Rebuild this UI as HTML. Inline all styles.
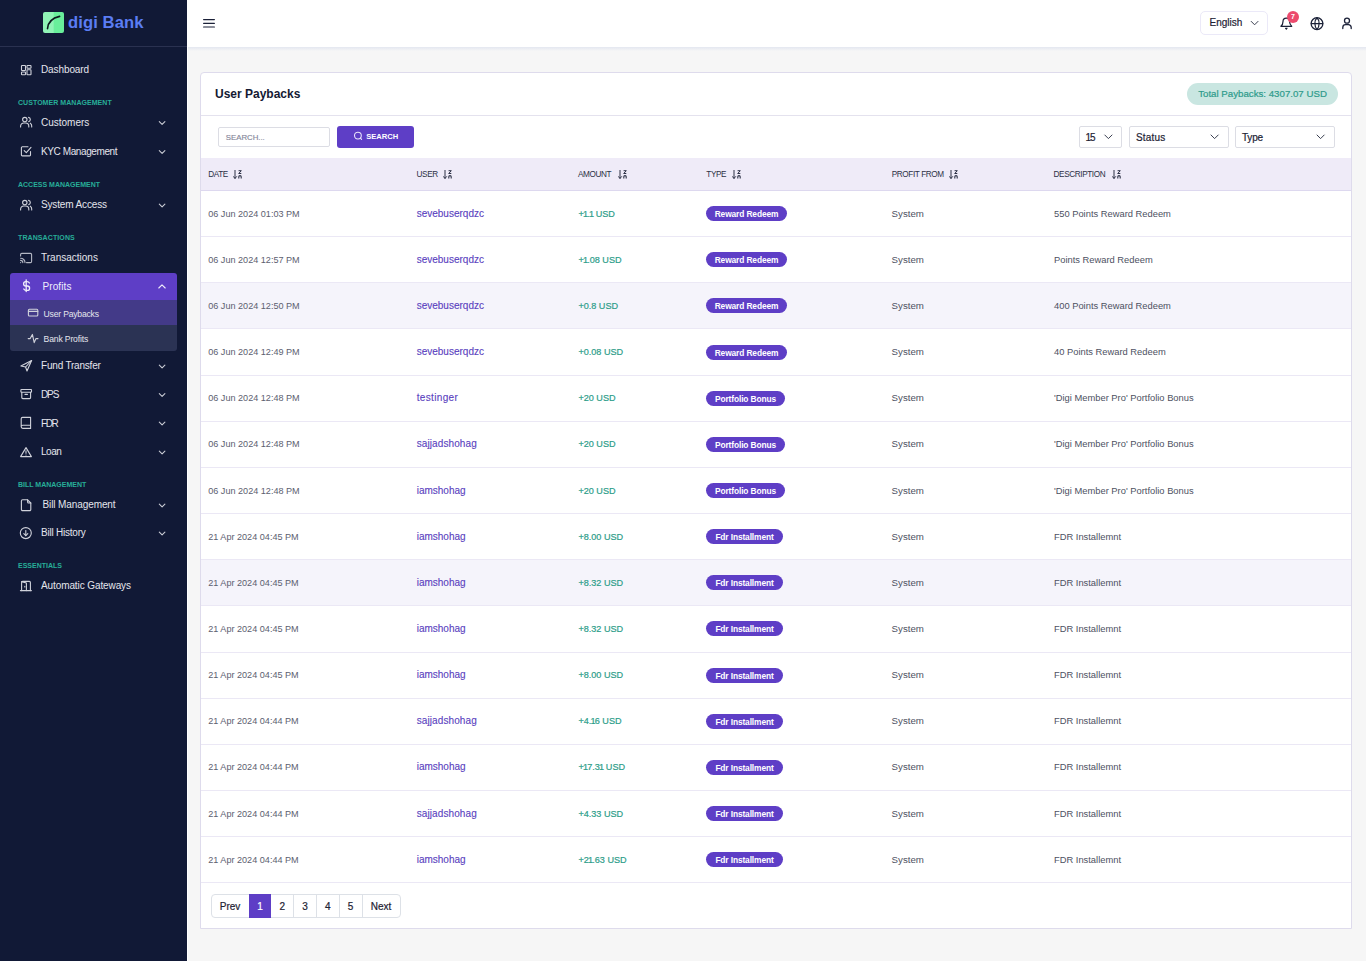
<!DOCTYPE html>
<html><head><meta charset="utf-8">
<style>
*{box-sizing:border-box;margin:0;padding:0}
html,body{width:1366px;height:961px;overflow:hidden}
body{background:#f6f6f6;font-family:"Liberation Sans",sans-serif;position:relative}
.a{position:absolute}
.t{position:absolute;white-space:nowrap;line-height:20px;height:20px}
#sb{position:absolute;left:0;top:0;width:187px;height:961px;background:#111936}
#sb .t{color:#e4e5ec;font-size:10px;left:41px}
#sb .sec{color:#27ad98;font-size:7px;left:18px;font-weight:bold}
#sb svg{position:absolute}
#hdr{position:absolute;left:187px;top:0;width:1179px;height:47px;background:#fff}
#card{position:absolute;left:200px;top:72px;width:1152px;height:857px;background:#fff;border:1px solid #dedbec;border-radius:4px 4px 0 0;overflow:hidden}
.th{font-size:8.2px;color:#2c3045;letter-spacing:-0.4px}
.td{font-size:10px}
.dt{font-size:9.1px;color:#5c6070}
.us{color:#5a3fc0;-webkit-text-stroke:.12px #5a3fc0}
.am{font-size:9.1px;color:#2c9d89;-webkit-text-stroke:.2px #2c9d89}
.n1{letter-spacing:-0.8px;margin-left:-0.8px}
.bd{height:15px;line-height:16px;border-radius:8px;background:#5e3ec6;color:#fff;font-weight:bold;font-size:8.4px;text-align:center;letter-spacing:-.12px}
.sy{color:#4d5162;font-size:9.7px}
.ds{color:#4d5162;font-size:9.35px}
</style></head><body>
<div id="sb">
  <div class="a" style="left:43px;top:12px;width:21px;height:21px;border-radius:2px;background:linear-gradient(90deg,#90f4b6 0,#90f4b6 49%,#69ef9b 52%,#69ef9b 100%)"></div>
  <svg style="left:43px;top:12px" width="21" height="21" viewBox="0 0 21 21"><path d="M4.5 16.6 C5 10.5 9.5 6 16.6 4.4" fill="none" stroke="#0d1a1e" stroke-width="1.6" stroke-linecap="round"/></svg>
  <div class="t" style="left:68px;top:12.6px;font-size:16.6px;font-weight:bold;color:#5b7df3;line-height:20px;letter-spacing:0.1px">digi Bank</div>
  <div class="a" style="left:0;top:46px;width:187px;height:1px;background:#2a3150"></div>

  <!-- active profits block -->
  <div class="a" style="left:10px;top:273px;width:167px;height:27px;background:#5e3ec6;border-radius:3px 3px 0 0"></div>
  <div class="a" style="left:10px;top:300px;width:167px;height:25px;background:#433a88"></div>
  <div class="a" style="left:10px;top:325px;width:167px;height:26px;background:#2b3354;border-radius:0 0 3px 3px"></div>

  <div class="t" style="top:60.2px;letter-spacing:-0.1px">Dashboard</div>
  <div class="t sec" style="top:93.1px;letter-spacing:0.05px">CUSTOMER MANAGEMENT</div>
  <div class="t" style="top:113.2px">Customers</div>
  <div class="t" style="top:142.0px;letter-spacing:-0.4px">KYC Management</div>
  <div class="t sec" style="top:175.4px">ACCESS MANAGEMENT</div>
  <div class="t" style="top:195.2px;letter-spacing:-0.15px">System Access</div>
  <div class="t sec" style="top:228.0px;letter-spacing:0.1px">TRANSACTIONS</div>
  <div class="t" style="top:248.1px">Transactions</div>
  <div class="t" style="top:276.5px;left:42.5px;letter-spacing:0.1px;color:#f0eefb">Profits</div>
  <div class="t" style="top:303.6px;left:43.6px;font-size:8.6px;letter-spacing:-0.2px">User Paybacks</div>
  <div class="t" style="top:328.8px;left:43.6px;font-size:8.6px;letter-spacing:-0.15px">Bank Profits</div>
  <div class="t" style="top:356.2px;letter-spacing:-0.2px">Fund Transfer</div>
  <div class="t" style="top:385.2px;letter-spacing:-1.1px">DPS</div>
  <div class="t" style="top:413.6px;letter-spacing:-1.4px">FDR</div>
  <div class="t" style="top:442.3px;letter-spacing:-0.45px">Loan</div>
  <div class="t sec" style="top:475.2px">BILL MANAGEMENT</div>
  <div class="t" style="top:495.1px;left:42.5px;letter-spacing:-0.1px">Bill Management</div>
  <div class="t" style="top:523.2px;letter-spacing:-0.22px">Bill History</div>
  <div class="t sec" style="top:555.9px">ESSENTIALS</div>
  <div class="t" style="top:576.1px;letter-spacing:-0.1px">Automatic Gateways</div>

  <svg class="a" style="left:0;top:0" width="187" height="961" viewBox="0 0 187 961" fill="none" stroke="#d0d2db" stroke-width="1.1" stroke-linecap="round" stroke-linejoin="round">
    <!-- dashboard -->
    <rect x="21.5" y="65.5" width="4" height="5" rx=".6"/><rect x="21.5" y="72" width="4" height="2.8" rx=".6"/>
    <rect x="27" y="65.5" width="4" height="2.8" rx=".6"/><rect x="27" y="69.8" width="4" height="5" rx=".6"/>
    <!-- customers -->
    <circle cx="24.8" cy="119.6" r="2.2"/><path d="M20.6 127 v-.8 a3.2 3.2 0 0 1 3.2-3.2 h1.8 a3.2 3.2 0 0 1 3.2 3.2 v.8"/><path d="M28.6 117.4 a2.2 2.2 0 0 1 0 4.3"/><path d="M30.3 123.2 a3 3 0 0 1 1.4 2.8 v1"/>
    <!-- kyc -->
    <path d="M28 146.8 H22.3 a.9 .9 0 0 0 -.9 .9 V155 a.9 .9 0 0 0 .9 .9 H29.6 a.9 .9 0 0 0 .9 -.9 V151.5"/><path d="M24.2 150.6 L26.3 152.6 L31 147.3"/>
    <!-- system access -->
    <circle cx="24.8" cy="202.6" r="2.2"/><path d="M20.6 210 v-.8 a3.2 3.2 0 0 1 3.2-3.2 h1.8 a3.2 3.2 0 0 1 3.2 3.2 v.8"/><path d="M28.6 200.4 a2.2 2.2 0 0 1 0 4.3"/><path d="M30.3 206.2 a3 3 0 0 1 1.4 2.8 v1"/>
    <!-- transactions cast -->
    <g stroke="#b4b7c4"><path d="M20.6 256 V254.6 a1.2 1.2 0 0 1 1.2 -1.2 H30.4 a1.2 1.2 0 0 1 1.2 1.2 V261.4 a1.2 1.2 0 0 1 -1.2 1.2 H26.5"/><path d="M20.6 262.6 h.1"/><path d="M20.6 260.4 a2.2 2.2 0 0 1 2.2 2.2"/><path d="M20.6 258.2 a4.4 4.4 0 0 1 4.4 4.4"/></g>
    <!-- $ -->
    <path d="M29.4 283 a2.6 2.3 0 0 0 -2.4 -1.4 h-1.2 a2.2 2.2 0 0 0 0 4.4 h1.6 a2.2 2.2 0 0 1 0 4.4 h-1.2 a2.6 2.3 0 0 1 -2.4 -1.4" stroke="#f0eefb" stroke-width="1.3"/><path d="M26.2 279.8 V291.6" stroke="#f0eefb" stroke-width="1.3"/>
    <!-- chevron up for profits -->
    <path d="M158.8 288 L162 284.8 L165.2 288" stroke="#f0eefb"/>
    <!-- user paybacks card -->
    <rect x="28.4" y="309.2" width="9.4" height="6.8" rx="1"/><path d="M28.4 311.4 H37.8"/>
    <!-- bank profits pulse -->
    <path d="M28.2 338.6 H30.2 L32.4 334.4 L34.2 342.6 L36 338.6 H38"/>
    <!-- fund transfer send -->
    <path d="M31.6 360.5 L20.9 366 L25.6 367 L27 371 Z"/><path d="M31.6 360.5 L25.6 367"/>
    <!-- dps archive -->
    <rect x="20.9" y="389.5" width="10.6" height="2.8" rx=".6"/><path d="M21.8 392.3 V397.6 a1 1 0 0 0 1 1 H29.6 a1 1 0 0 0 1-1 V392.3"/><path d="M25 394.4 H27.4"/>
    <!-- fdr book -->
    <path d="M21.2 426.8 V418.8 a1.4 1.4 0 0 1 1.4 -1.4 H30.6 V428.4 H22.8 a1.6 1.6 0 0 1 0 -3.2 H30.6"/>
    <!-- loan warning -->
    <path d="M26 447.6 L20.6 456.6 H31.4 Z"/><path d="M26 450.8 V453.2"/><path d="M26 455 h.01"/>
    <!-- bill doc -->
    <path d="M27.6 499.8 H22.6 a1.2 1.2 0 0 0 -1.2 1.2 V509.4 a1.2 1.2 0 0 0 1.2 1.2 H29.6 a1.2 1.2 0 0 0 1.2 -1.2 V503 Z"/><path d="M27.6 499.8 V502 a1 1 0 0 0 1 1 H30.8"/>
    <!-- bill history -->
    <circle cx="25.8" cy="533.1" r="5.5"/><path d="M25.8 530.6 V535.6"/><path d="M23.8 533.6 L25.8 535.6 L27.8 533.6"/>
    <!-- gateways door -->
    <path d="M20.4 590.6 H31.4"/><path d="M21.6 590.6 V582.4 a1 1 0 0 1 1 -1 H29.4 a1 1 0 0 1 1 1 V590.6"/><path d="M21.6 581.6 L26.4 583 V590.6"/><path d="M24.8 586.2 V587"/>
    <!-- chevrons -->
    <g stroke="#c9cbd4">
    <path d="M159.3 121.6 L162.1 124.4 L164.9 121.6"/>
    <path d="M159.3 150.6 L162.1 153.4 L164.9 150.6"/>
    <path d="M159.3 204.1 L162.1 206.9 L164.9 204.1"/>
    <path d="M159.3 365.1 L162.1 367.9 L164.9 365.1"/>
    <path d="M159.3 393.6 L162.1 396.4 L164.9 393.6"/>
    <path d="M159.3 422.1 L162.1 424.9 L164.9 422.1"/>
    <path d="M159.3 451.1 L162.1 453.9 L164.9 451.1"/>
    <path d="M159.3 504.1 L162.1 506.9 L164.9 504.1"/>
    <path d="M159.3 532.1 L162.1 534.9 L164.9 532.1"/>
    </g>
  </svg>
</div>
<div id="hdr">
  <svg class="a" style="left:0;top:0" width="1179" height="47" viewBox="187 0 1179 47" fill="none" stroke="#1b2138" stroke-width="1.2" stroke-linecap="round" stroke-linejoin="round">
    <path d="M203.6 19.6 H214.4"/><path d="M203.6 23.3 H214.4"/><path d="M203.6 27 H214.4" stroke="#1b2138"/>
    <!-- english chevron -->
    <path d="M1251.2 21.4 L1254.6 24.8 L1258 21.4" stroke="#3a3f50" stroke-width="1"/>
    <!-- bell -->
    <path d="M1280.9 26.3 C1282.6 25 1283 23.6 1283 21.6 a3.3 3.4 0 0 1 6.6 0 C1289.6 23.6 1290 25 1291.7 26.3 Z" stroke-width="1.25"/><path d="M1285.5 28.2 L1286.3 29.2 L1287.1 28.2 Z" stroke-width="1.1" fill="#1b2138"/>
    <!-- globe -->
    <circle cx="1317" cy="23.6" r="5.9" stroke-width="1.3"/><path d="M1311.3 23.6 H1322.7" stroke-width="1.2"/><path d="M1317 17.8 C1314.2 20.5 1314.2 26.7 1317 29.4 C1319.8 26.7 1319.8 20.5 1317 17.8" stroke-width="1.2"/>
    <!-- user -->
    <circle cx="1347" cy="20.7" r="2.5" stroke-width="1.3"/><path d="M1342.8 28.6 V27.4 a2.8 2.8 0 0 1 2.8 -2.8 H1348.4 a2.8 2.8 0 0 1 2.8 2.8 V28.6" stroke-width="1.3"/>
  </svg>
  <div class="a" style="left:1013px;top:11px;width:68px;height:24px;border:1px solid #ebe9f8;border-radius:5px"></div>
  <div class="t" style="left:1022.6px;top:13.2px;font-size:10px;color:#1d2233;letter-spacing:-0.02px;-webkit-text-stroke:.2px #1d2233">English</div>
  <div class="a" style="left:1100px;top:10.8px;width:12px;height:12px;border-radius:6px;background:#ec4a6d"></div>
  <div class="t" style="left:1100px;top:6.8px;width:12px;text-align:center;font-size:7px;font-weight:bold;color:#fff">7</div>
</div>
<div class="a" style="left:187px;top:47px;width:1179px;height:4px;background:linear-gradient(#e4e7f0,#f6f6f6)"></div>
<div class="a" style="left:187px;top:47px;width:1px;height:914px;background:#fff"></div>
<div id="card">
  <div class="t" style="left:14px;top:10.6px;font-size:12px;font-weight:bold;color:#141a33">User Paybacks</div>
  <div class="a" style="left:986px;top:10px;width:151px;height:22px;border-radius:11px;background:#c9e6e1"></div>
  <div class="t" style="left:997.2px;top:10.9px;font-size:9.7px;color:#2e9b8b;-webkit-text-stroke:.2px #2e9b8b">Total Paybacks: 4307.07 USD</div>
  <div class="a" style="left:0;top:42px;width:1152px;height:1px;background:#e4e2ee"></div>
  <!-- filters -->
  <div class="a" style="left:17px;top:54px;width:112px;height:20px;border:1px solid #dcdde4;border-radius:2px"></div>
  <div class="t" style="left:24.8px;top:54.7px;font-size:7.8px;color:#85879a;-webkit-text-stroke:.15px #85879a">SEARCH...</div>
  <div class="a" style="left:136px;top:53px;width:77px;height:22px;border-radius:3px;background:#5e3ec6"></div>
  <svg class="a" style="left:151px;top:57.2px" width="12" height="12" viewBox="0 0 12 12" fill="none" stroke="#e9e4fa" stroke-width="1.1" stroke-linecap="round"><circle cx="5.9" cy="5.6" r="3.4"/><path d="M8.4 8.1 L9.6 9.3"/></svg>
  <div class="t" style="left:165.2px;top:53.8px;font-size:7.6px;font-weight:bold;color:#fff">SEARCH</div>

  <div class="a" style="left:878px;top:53px;width:43px;height:22px;border:1px solid #dcdde4;border-radius:2px"></div>
  <div class="t" style="left:885.5px;top:54.5px;font-size:10px;color:#1d2233;letter-spacing:0;-webkit-text-stroke:.2px #1d2233"><span style="margin-left:-1px;letter-spacing:-1.1px">1</span>5</div>
  <div class="a" style="left:928px;top:53px;width:100px;height:22px;border:1px solid #dcdde4;border-radius:2px"></div>
  <div class="t" style="left:935px;top:54.5px;font-size:10px;color:#1d2233;letter-spacing:0.2px;-webkit-text-stroke:.2px #1d2233">Status</div>
  <div class="a" style="left:1034px;top:53px;width:100px;height:22px;border:1px solid #dcdde4;border-radius:2px"></div>
  <div class="t" style="left:1041px;top:54.5px;font-size:10px;color:#1d2233;letter-spacing:-0.2px;-webkit-text-stroke:.2px #1d2233">Type</div>
  <svg class="a" style="left:0;top:0" width="1152" height="100" viewBox="201 73 1152 100" fill="none" stroke="#3a3f50" stroke-width="1" stroke-linecap="round" stroke-linejoin="round">
    <path d="M1104.8 135 L1108.4 138.6 L1112 135"/>
    <path d="M1211 135 L1214.6 138.6 L1218.2 135"/>
    <path d="M1317 135 L1320.6 138.6 L1324.2 135"/>
  </svg>
<div class="a" style="left:0;top:85px;width:1152px;height:32px;background:#efebf8"></div>
<div class="a" style="left:0;top:117px;width:1152px;height:1px;background:#ddd8ef"></div>
<div class="t th" style="left:7.2px;top:91.8px">DATE</div>
<svg class="a" style="left:31.6px;top:97px" width="10" height="10" viewBox="0 0 10 10"><path d="M2 .3 V8.4 M.4 6.6 L2 8.4 L3.6 6.6" fill="none" stroke="#2c3045" stroke-width="1" stroke-linecap="round" stroke-linejoin="round"/><path d="M5.6 .7 H8.3 L5.7 3.5 H8.3" fill="none" stroke="#2c3045" stroke-width="1"/><path d="M5.8 8.6 V6.8 a1.2 1.2 0 0 1 2.4 0 V8.6" fill="none" stroke="#2c3045" stroke-width="1.1"/></svg>
<div class="t th" style="left:215.6px;top:91.8px">USER</div>
<svg class="a" style="left:241.6px;top:97px" width="10" height="10" viewBox="0 0 10 10"><path d="M2 .3 V8.4 M.4 6.6 L2 8.4 L3.6 6.6" fill="none" stroke="#2c3045" stroke-width="1" stroke-linecap="round" stroke-linejoin="round"/><path d="M5.6 .7 H8.3 L5.7 3.5 H8.3" fill="none" stroke="#2c3045" stroke-width="1"/><path d="M5.8 8.6 V6.8 a1.2 1.2 0 0 1 2.4 0 V8.6" fill="none" stroke="#2c3045" stroke-width="1.1"/></svg>
<div class="t th" style="left:377px;top:91.8px">AMOUNT</div>
<svg class="a" style="left:417.1px;top:97px" width="10" height="10" viewBox="0 0 10 10"><path d="M2 .3 V8.4 M.4 6.6 L2 8.4 L3.6 6.6" fill="none" stroke="#2c3045" stroke-width="1" stroke-linecap="round" stroke-linejoin="round"/><path d="M5.6 .7 H8.3 L5.7 3.5 H8.3" fill="none" stroke="#2c3045" stroke-width="1"/><path d="M5.8 8.6 V6.8 a1.2 1.2 0 0 1 2.4 0 V8.6" fill="none" stroke="#2c3045" stroke-width="1.1"/></svg>
<div class="t th" style="left:505.3px;top:91.8px">TYPE</div>
<svg class="a" style="left:530.9px;top:97px" width="10" height="10" viewBox="0 0 10 10"><path d="M2 .3 V8.4 M.4 6.6 L2 8.4 L3.6 6.6" fill="none" stroke="#2c3045" stroke-width="1" stroke-linecap="round" stroke-linejoin="round"/><path d="M5.6 .7 H8.3 L5.7 3.5 H8.3" fill="none" stroke="#2c3045" stroke-width="1"/><path d="M5.8 8.6 V6.8 a1.2 1.2 0 0 1 2.4 0 V8.6" fill="none" stroke="#2c3045" stroke-width="1.1"/></svg>
<div class="t th" style="left:690.8px;top:91.8px">PROFIT FROM</div>
<svg class="a" style="left:748.1px;top:97px" width="10" height="10" viewBox="0 0 10 10"><path d="M2 .3 V8.4 M.4 6.6 L2 8.4 L3.6 6.6" fill="none" stroke="#2c3045" stroke-width="1" stroke-linecap="round" stroke-linejoin="round"/><path d="M5.6 .7 H8.3 L5.7 3.5 H8.3" fill="none" stroke="#2c3045" stroke-width="1"/><path d="M5.8 8.6 V6.8 a1.2 1.2 0 0 1 2.4 0 V8.6" fill="none" stroke="#2c3045" stroke-width="1.1"/></svg>
<div class="t th" style="left:852.6px;top:91.8px">DESCRIPTION</div>
<svg class="a" style="left:911.4px;top:97px" width="10" height="10" viewBox="0 0 10 10"><path d="M2 .3 V8.4 M.4 6.6 L2 8.4 L3.6 6.6" fill="none" stroke="#2c3045" stroke-width="1" stroke-linecap="round" stroke-linejoin="round"/><path d="M5.6 .7 H8.3 L5.7 3.5 H8.3" fill="none" stroke="#2c3045" stroke-width="1"/><path d="M5.8 8.6 V6.8 a1.2 1.2 0 0 1 2.4 0 V8.6" fill="none" stroke="#2c3045" stroke-width="1.1"/></svg>
<div class="a" style="left:0;top:118.00px;width:1152px;height:45.16px;background:#fff"></div>
<div class="a" style="left:0;top:163.16px;width:1152px;height:1px;background:#ebe8f5"></div>
<div class="t td dt" style="left:7.2px;top:130.57px">06 Jun 2024 01:03 PM</div>
<div class="t td us" style="left:215.7px;top:130.57px;letter-spacing:0px">sevebuserqdzc</div>
<div class="t td am" style="left:377.4px;top:130.57px">+<span class="n1">1</span>.<span class="n1">1</span> USD</div>
<div class="t bd" style="left:505px;top:133.07px;width:81px">Reward Redeem</div>
<div class="t td sy" style="left:690.6px;top:130.57px">System</div>
<div class="t td ds" style="left:853px;top:130.57px">550 Points Reward Redeem</div>
<div class="a" style="left:0;top:164.16px;width:1152px;height:45.16px;background:#fff"></div>
<div class="a" style="left:0;top:209.31px;width:1152px;height:1px;background:#ebe8f5"></div>
<div class="t td dt" style="left:7.2px;top:176.72px">06 Jun 2024 12:57 PM</div>
<div class="t td us" style="left:215.7px;top:176.72px;letter-spacing:0px">sevebuserqdzc</div>
<div class="t td am" style="left:377.4px;top:176.72px">+<span class="n1">1</span>.08 USD</div>
<div class="t bd" style="left:505px;top:179.22px;width:81px">Reward Redeem</div>
<div class="t td sy" style="left:690.6px;top:176.72px">System</div>
<div class="t td ds" style="left:853px;top:176.72px">Points Reward Redeem</div>
<div class="a" style="left:0;top:210.31px;width:1152px;height:45.16px;background:#f5f4fb"></div>
<div class="a" style="left:0;top:255.47px;width:1152px;height:1px;background:#ebe8f5"></div>
<div class="t td dt" style="left:7.2px;top:222.88px">06 Jun 2024 12:50 PM</div>
<div class="t td us" style="left:215.7px;top:222.88px;letter-spacing:0px">sevebuserqdzc</div>
<div class="t td am" style="left:377.4px;top:222.88px">+0.8 USD</div>
<div class="t bd" style="left:505px;top:225.38px;width:81px">Reward Redeem</div>
<div class="t td sy" style="left:690.6px;top:222.88px">System</div>
<div class="t td ds" style="left:853px;top:222.88px">400 Points Reward Redeem</div>
<div class="a" style="left:0;top:256.47px;width:1152px;height:45.16px;background:#fff"></div>
<div class="a" style="left:0;top:301.62px;width:1152px;height:1px;background:#ebe8f5"></div>
<div class="t td dt" style="left:7.2px;top:269.04px">06 Jun 2024 12:49 PM</div>
<div class="t td us" style="left:215.7px;top:269.04px;letter-spacing:0px">sevebuserqdzc</div>
<div class="t td am" style="left:377.4px;top:269.04px">+0.08 USD</div>
<div class="t bd" style="left:505px;top:271.54px;width:81px">Reward Redeem</div>
<div class="t td sy" style="left:690.6px;top:269.04px">System</div>
<div class="t td ds" style="left:853px;top:269.04px">40 Points Reward Redeem</div>
<div class="a" style="left:0;top:302.62px;width:1152px;height:45.16px;background:#fff"></div>
<div class="a" style="left:0;top:347.77px;width:1152px;height:1px;background:#ebe8f5"></div>
<div class="t td dt" style="left:7.2px;top:315.19px">06 Jun 2024 12:48 PM</div>
<div class="t td us" style="left:215.7px;top:315.19px;letter-spacing:0.35px">testinger</div>
<div class="t td am" style="left:377.4px;top:315.19px">+20 USD</div>
<div class="t bd" style="left:505px;top:317.69px;width:79px">Portfolio Bonus</div>
<div class="t td sy" style="left:690.6px;top:315.19px">System</div>
<div class="t td ds" style="left:853px;top:315.19px">'Digi Member Pro' Portfolio Bonus</div>
<div class="a" style="left:0;top:348.77px;width:1152px;height:45.16px;background:#fff"></div>
<div class="a" style="left:0;top:393.93px;width:1152px;height:1px;background:#ebe8f5"></div>
<div class="t td dt" style="left:7.2px;top:361.34px">06 Jun 2024 12:48 PM</div>
<div class="t td us" style="left:215.7px;top:361.34px;letter-spacing:0.1px">sajjadshohag</div>
<div class="t td am" style="left:377.4px;top:361.34px">+20 USD</div>
<div class="t bd" style="left:505px;top:363.84px;width:79px">Portfolio Bonus</div>
<div class="t td sy" style="left:690.6px;top:361.34px">System</div>
<div class="t td ds" style="left:853px;top:361.34px">'Digi Member Pro' Portfolio Bonus</div>
<div class="a" style="left:0;top:394.93px;width:1152px;height:45.16px;background:#fff"></div>
<div class="a" style="left:0;top:440.09px;width:1152px;height:1px;background:#ebe8f5"></div>
<div class="t td dt" style="left:7.2px;top:407.50px">06 Jun 2024 12:48 PM</div>
<div class="t td us" style="left:215.7px;top:407.50px;letter-spacing:0px">iamshohag</div>
<div class="t td am" style="left:377.4px;top:407.50px">+20 USD</div>
<div class="t bd" style="left:505px;top:410.00px;width:79px">Portfolio Bonus</div>
<div class="t td sy" style="left:690.6px;top:407.50px">System</div>
<div class="t td ds" style="left:853px;top:407.50px">'Digi Member Pro' Portfolio Bonus</div>
<div class="a" style="left:0;top:441.09px;width:1152px;height:45.16px;background:#fff"></div>
<div class="a" style="left:0;top:486.24px;width:1152px;height:1px;background:#ebe8f5"></div>
<div class="t td dt" style="left:7.2px;top:453.66px">21 Apr 2024 04:45 PM</div>
<div class="t td us" style="left:215.7px;top:453.66px;letter-spacing:0px">iamshohag</div>
<div class="t td am" style="left:377.4px;top:453.66px">+8.00 USD</div>
<div class="t bd" style="left:505px;top:456.16px;width:77px">Fdr Installment</div>
<div class="t td sy" style="left:690.6px;top:453.66px">System</div>
<div class="t td ds" style="left:853px;top:453.66px">FDR Installemnt</div>
<div class="a" style="left:0;top:487.24px;width:1152px;height:45.16px;background:#f5f4fb"></div>
<div class="a" style="left:0;top:532.39px;width:1152px;height:1px;background:#ebe8f5"></div>
<div class="t td dt" style="left:7.2px;top:499.81px">21 Apr 2024 04:45 PM</div>
<div class="t td us" style="left:215.7px;top:499.81px;letter-spacing:0px">iamshohag</div>
<div class="t td am" style="left:377.4px;top:499.81px">+8.32 USD</div>
<div class="t bd" style="left:505px;top:502.31px;width:77px">Fdr Installment</div>
<div class="t td sy" style="left:690.6px;top:499.81px">System</div>
<div class="t td ds" style="left:853px;top:499.81px">FDR Installemnt</div>
<div class="a" style="left:0;top:533.39px;width:1152px;height:45.16px;background:#fff"></div>
<div class="a" style="left:0;top:578.55px;width:1152px;height:1px;background:#ebe8f5"></div>
<div class="t td dt" style="left:7.2px;top:545.97px">21 Apr 2024 04:45 PM</div>
<div class="t td us" style="left:215.7px;top:545.97px;letter-spacing:0px">iamshohag</div>
<div class="t td am" style="left:377.4px;top:545.97px">+8.32 USD</div>
<div class="t bd" style="left:505px;top:548.47px;width:77px">Fdr Installment</div>
<div class="t td sy" style="left:690.6px;top:545.97px">System</div>
<div class="t td ds" style="left:853px;top:545.97px">FDR Installemnt</div>
<div class="a" style="left:0;top:579.55px;width:1152px;height:45.16px;background:#fff"></div>
<div class="a" style="left:0;top:624.70px;width:1152px;height:1px;background:#ebe8f5"></div>
<div class="t td dt" style="left:7.2px;top:592.12px">21 Apr 2024 04:45 PM</div>
<div class="t td us" style="left:215.7px;top:592.12px;letter-spacing:0px">iamshohag</div>
<div class="t td am" style="left:377.4px;top:592.12px">+8.00 USD</div>
<div class="t bd" style="left:505px;top:594.62px;width:77px">Fdr Installment</div>
<div class="t td sy" style="left:690.6px;top:592.12px">System</div>
<div class="t td ds" style="left:853px;top:592.12px">FDR Installemnt</div>
<div class="a" style="left:0;top:625.71px;width:1152px;height:45.16px;background:#fff"></div>
<div class="a" style="left:0;top:670.86px;width:1152px;height:1px;background:#ebe8f5"></div>
<div class="t td dt" style="left:7.2px;top:638.28px">21 Apr 2024 04:44 PM</div>
<div class="t td us" style="left:215.7px;top:638.28px;letter-spacing:0.1px">sajjadshohag</div>
<div class="t td am" style="left:377.4px;top:638.28px">+4.<span class="n1">1</span>6 USD</div>
<div class="t bd" style="left:505px;top:640.78px;width:77px">Fdr Installment</div>
<div class="t td sy" style="left:690.6px;top:638.28px">System</div>
<div class="t td ds" style="left:853px;top:638.28px">FDR Installemnt</div>
<div class="a" style="left:0;top:671.86px;width:1152px;height:45.16px;background:#fff"></div>
<div class="a" style="left:0;top:717.01px;width:1152px;height:1px;background:#ebe8f5"></div>
<div class="t td dt" style="left:7.2px;top:684.43px">21 Apr 2024 04:44 PM</div>
<div class="t td us" style="left:215.7px;top:684.43px;letter-spacing:0px">iamshohag</div>
<div class="t td am" style="left:377.4px;top:684.43px">+<span class="n1">1</span>7.3<span class="n1">1</span> USD</div>
<div class="t bd" style="left:505px;top:686.93px;width:77px">Fdr Installment</div>
<div class="t td sy" style="left:690.6px;top:684.43px">System</div>
<div class="t td ds" style="left:853px;top:684.43px">FDR Installemnt</div>
<div class="a" style="left:0;top:718.01px;width:1152px;height:45.16px;background:#fff"></div>
<div class="a" style="left:0;top:763.17px;width:1152px;height:1px;background:#ebe8f5"></div>
<div class="t td dt" style="left:7.2px;top:730.59px">21 Apr 2024 04:44 PM</div>
<div class="t td us" style="left:215.7px;top:730.59px;letter-spacing:0.1px">sajjadshohag</div>
<div class="t td am" style="left:377.4px;top:730.59px">+4.33 USD</div>
<div class="t bd" style="left:505px;top:733.09px;width:77px">Fdr Installment</div>
<div class="t td sy" style="left:690.6px;top:730.59px">System</div>
<div class="t td ds" style="left:853px;top:730.59px">FDR Installemnt</div>
<div class="a" style="left:0;top:764.17px;width:1152px;height:45.16px;background:#fff"></div>
<div class="a" style="left:0;top:809.33px;width:1152px;height:1px;background:#ebe8f5"></div>
<div class="t td dt" style="left:7.2px;top:776.74px">21 Apr 2024 04:44 PM</div>
<div class="t td us" style="left:215.7px;top:776.74px;letter-spacing:0px">iamshohag</div>
<div class="t td am" style="left:377.4px;top:776.74px">+2<span class="n1">1</span>.63 USD</div>
<div class="t bd" style="left:505px;top:779.24px;width:77px">Fdr Installment</div>
<div class="t td sy" style="left:690.6px;top:776.74px">System</div>
<div class="t td ds" style="left:853px;top:776.74px">FDR Installemnt</div>
<div class="a" style="left:10px;top:821px;width:190px;height:24px;border:1px solid #dde1e7;border-radius:4px"></div>
<div class="t" style="left:10px;top:823.8px;width:38px;text-align:center;font-size:10px;color:#1d2233;-webkit-text-stroke:.2px #1d2233">Prev</div>
<div class="a" style="left:48px;top:821px;width:22px;height:24px;background:#5e3ec6"></div>
<div class="t" style="left:48px;top:823.8px;width:22px;text-align:center;font-size:10px;color:#fff;-webkit-text-stroke:.2px #fff">1</div>
<div class="t" style="left:70px;top:823.8px;width:22.5px;text-align:center;font-size:10px;color:#1d2233;-webkit-text-stroke:.2px #1d2233">2</div>
<div class="a" style="left:92.0px;top:821px;width:1px;height:24px;background:#dde1e7"></div>
<div class="t" style="left:92.5px;top:823.8px;width:22.899999999999977px;text-align:center;font-size:10px;color:#1d2233;-webkit-text-stroke:.2px #1d2233">3</div>
<div class="a" style="left:114.89999999999998px;top:821px;width:1px;height:24px;background:#dde1e7"></div>
<div class="t" style="left:115.39999999999998px;top:823.8px;width:22.900000000000034px;text-align:center;font-size:10px;color:#1d2233;-webkit-text-stroke:.2px #1d2233">4</div>
<div class="a" style="left:137.8px;top:821px;width:1px;height:24px;background:#dde1e7"></div>
<div class="t" style="left:138.3px;top:823.8px;width:22.69999999999999px;text-align:center;font-size:10px;color:#1d2233;-webkit-text-stroke:.2px #1d2233">5</div>
<div class="a" style="left:160.5px;top:821px;width:1px;height:24px;background:#dde1e7"></div>
<div class="t" style="left:161px;top:823.8px;width:38px;text-align:center;font-size:10px;color:#1d2233;-webkit-text-stroke:.2px #1d2233">Next</div>
</div>

</body></html>
